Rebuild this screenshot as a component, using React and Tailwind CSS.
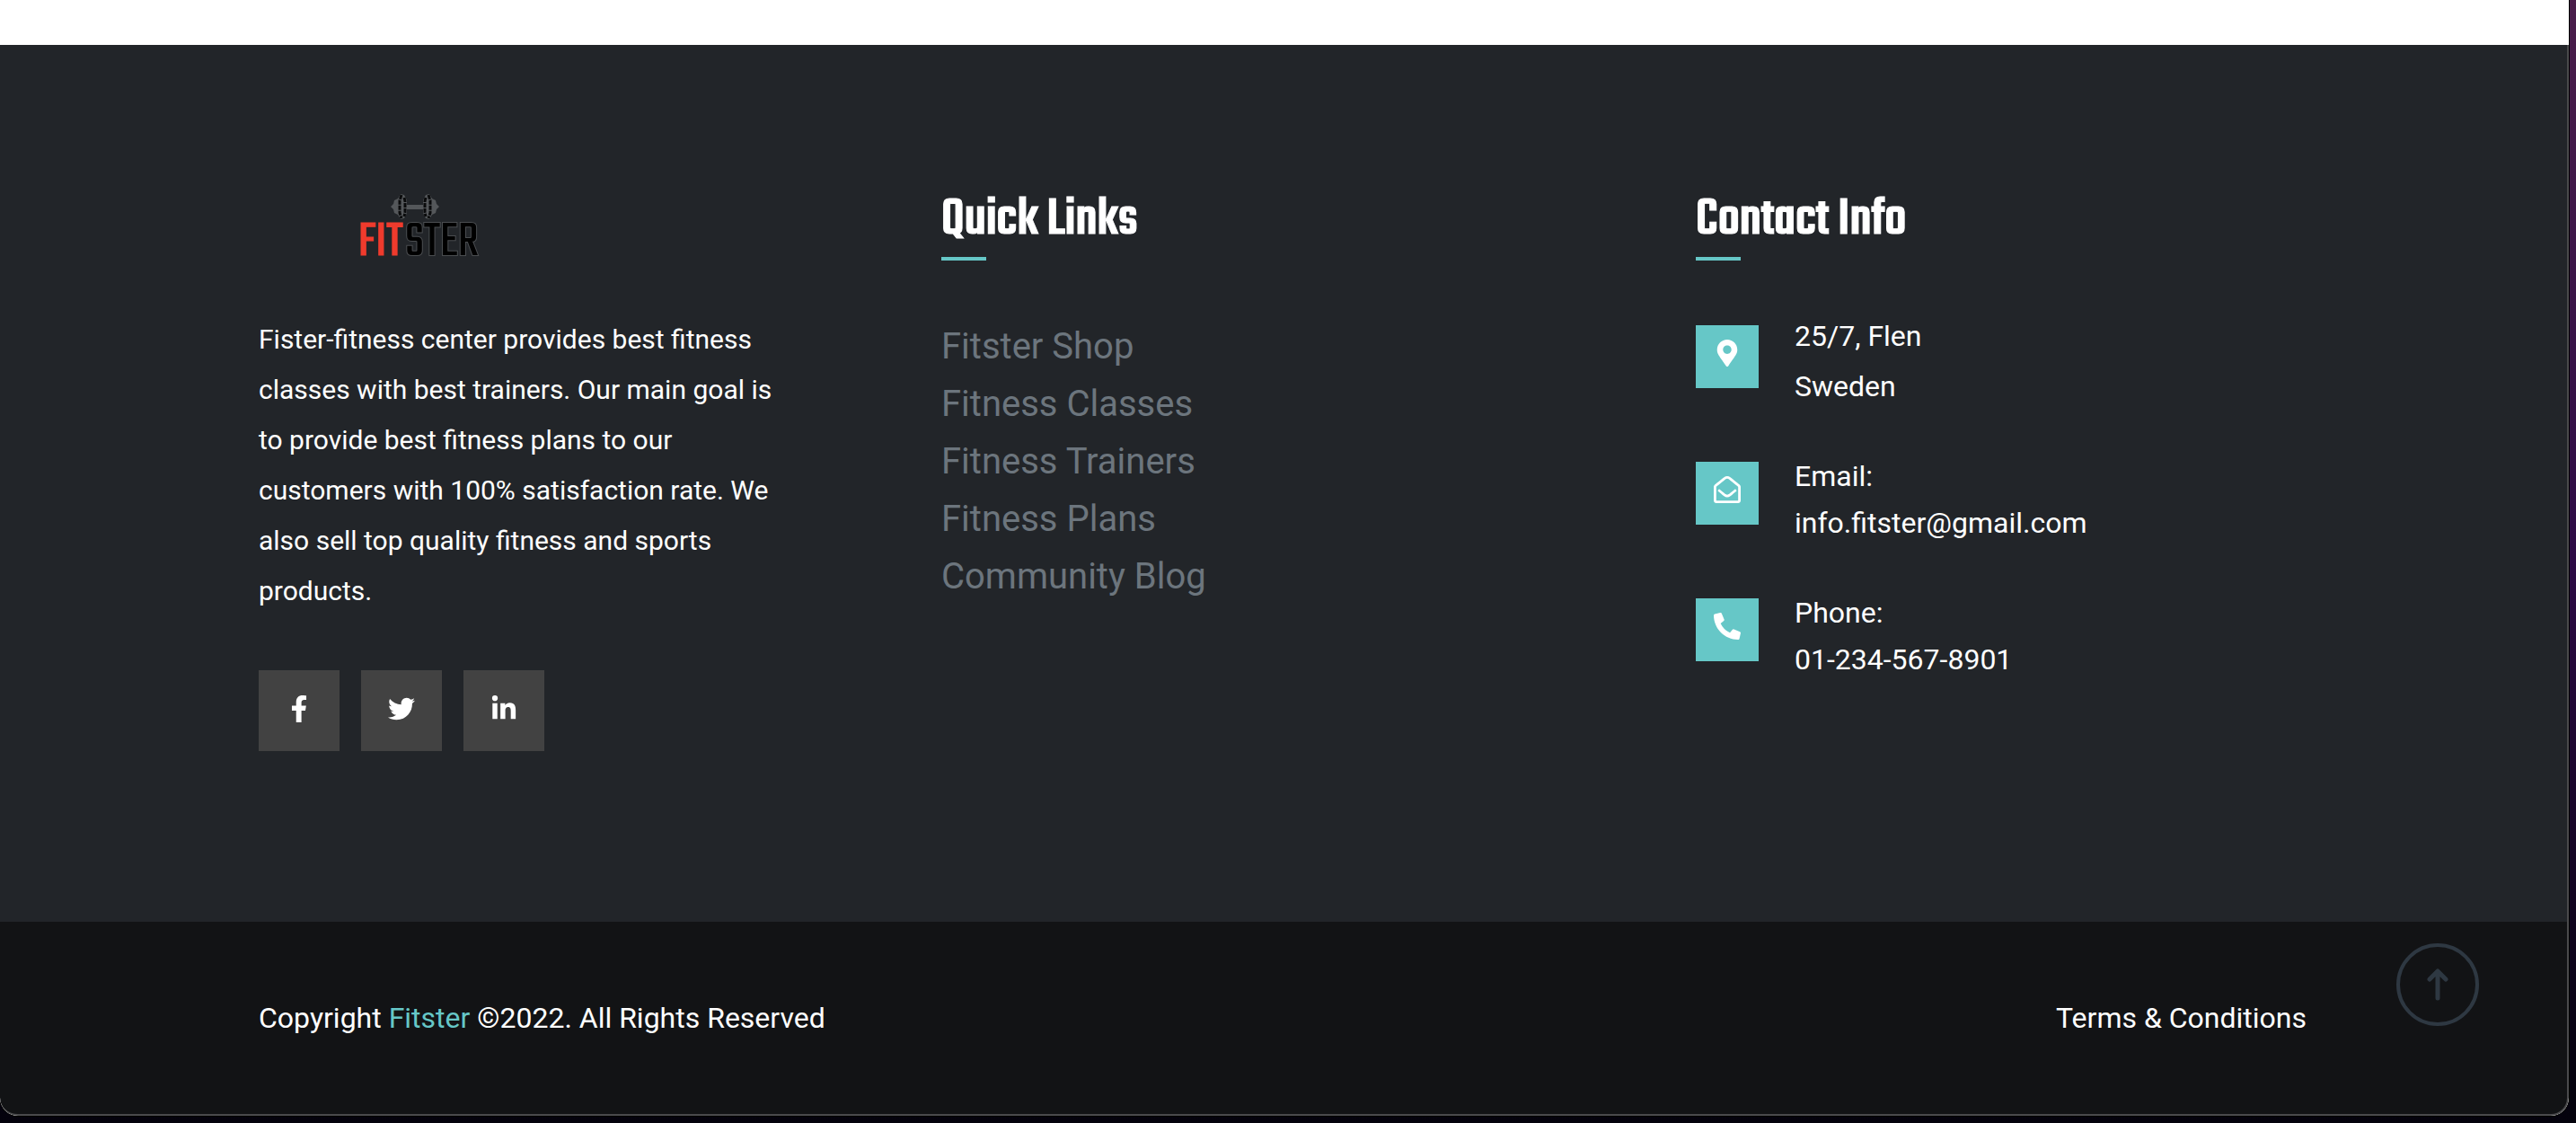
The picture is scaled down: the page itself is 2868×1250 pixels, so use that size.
import { FaFacebookF, FaTwitter, FaLinkedinIn, FaMapMarkerAlt, FaRegEnvelopeOpen, FaPhoneAlt } from "react-icons/fa";

const links = ["Fitster Shop", "Fitness Classes", "Fitness Trainers", "Fitness Plans", "Community Blog"];

const socials = [
  { label: "Facebook", Icon: FaFacebookF },
  { label: "Twitter", Icon: FaTwitter },
  { label: "LinkedIn", Icon: FaLinkedinIn },
];

const contacts = [
  { Icon: FaMapMarkerAlt, lines: ["25/7, Flen", "Sweden"], text: "leading-[56px] -mt-4" },
  { Icon: FaRegEnvelopeOpen, lines: ["Email:", "info.fitster@gmail.com"], text: "leading-[52px] -mt-2.5" },
  { Icon: FaPhoneAlt, lines: ["Phone:", "01-234-567-8901"], text: "leading-[52px] -mt-2.5" },
];

function Logo() {
  return (
    <svg viewBox="0 0 140 96" className="h-24 w-[140px] overflow-visible" role="img" aria-label="Fitster">
      <g fill="#54575a">
        <path d="M54 16h20v5H54z" />
        <path d="M37 18l3-3 1-4 4-2 3-5 4 1 3 6v14l-3 6-4 1-3-5-4-2-1-4z" />
        <path d="M91 18l-3-3-1-4-4-2-3-5-4 1-3 6v14l3 6 4 1 3-5 4-2 1-4z" />
      </g>
      <g fill="none" stroke="#0a0b0c" strokeWidth="3" strokeDasharray="5 1">
        <path d="M49 5l-2 6v14l2 6" />
        <path d="M52 8l1 4v12l-1 5" />
        <path d="M79 5l2 6v14l-2 6" />
        <path d="M76 8l-1 4v12l1 5" />
      </g>
      <text x="1" y="72" fontFamily="Teko, sans-serif" fontSize="58" fontWeight="400" fill="#ef3b2d" stroke="#ef3b2d" strokeWidth="1">FIT</text>
      <text x="53" y="72" fontFamily="Teko, sans-serif" fontSize="58" fontWeight="400" fill="#000" stroke="#4a4d50" strokeWidth="2" paintOrder="stroke">STER</text>
    </svg>
  );
}

function Heading({ children }) {
  return (
    <div>
      <h2 className="pb-1 font-['Teko',sans-serif] text-[60px] font-medium leading-[72px] text-white [-webkit-text-stroke:1px_white]">
        {children}
      </h2>
      <div className="h-1 w-[50px] bg-[#66c7c7]" />
    </div>
  );
}

export default function App() {
  return (
    <div className="min-h-screen bg-linear-to-b from-[#4a1d4a] via-[#2d0a45] to-[#04020c] pr-2 pb-2 font-['Roboto',sans-serif] text-white">
      <div className="overflow-hidden rounded-b-[20px] bg-white pt-[50px] shadow-[0_0_0_1px_#000]">
        <footer className="rounded-b-[20px] border-r-2 border-b-2 border-[#4a4a4c] bg-[#121315]">
          <div className="bg-[#222529] pt-40 pr-0.5 pb-[190px]">
            <div className="mx-auto grid max-w-[2280px] grid-cols-3">
              <section className="pr-[180px]">
                <a href="#home" aria-label="Fitster home" className="ml-[110px] block w-fit pt-0.5">
                  <Logo />
                </a>
                <p className="mt-[42px] text-[30px] leading-[56px]">
                  Fister-fitness center provides best fitness classes with best trainers. Our main goal is to
                  provide best fitness plans to our customers with 100% satisfaction rate. We also sell top
                  quality fitness and sports products.
                </p>
                <div className="mt-[60px] flex gap-6">
                  {socials.map(({ label, Icon }) => (
                    <a
                      key={label}
                      href={"#" + label.toLowerCase()}
                      aria-label={label}
                      className="flex size-[90px] justify-center bg-[#424242] pt-7"
                    >
                      <Icon className="size-[30px]" />
                    </a>
                  ))}
                </div>
              </section>

              <section>
                <Heading>Quick Links</Heading>
                <ul className="mt-16 text-[40px] leading-[64px] text-[#6c757d]">
                  {links.map((link) => (
                    <li key={link}>
                      <a href="#links">{link}</a>
                    </li>
                  ))}
                </ul>
              </section>

              <section className="pl-20">
                <Heading>Contact Info</Heading>
                <ul className="mt-[72px]">
                  {contacts.map(({ Icon, lines, text }) => (
                    <li key={lines[0]} className="flex h-[152px] gap-10">
                      <span className="flex size-[70px] justify-center bg-[#66c7c7] pt-4">
                        <Icon className="size-[30px]" />
                      </span>
                      <p className={"text-[32px] " + text}>
                        {lines[0]}
                        <br />
                        {lines[1]}
                      </p>
                    </li>
                  ))}
                </ul>
              </section>
            </div>
          </div>

          <div className="py-[79px] pr-0.5">
            <div className="mx-auto flex max-w-[2280px] justify-between text-[32px] leading-[56px]">
              <p>
                Copyright <a href="#home" className="text-[#66c7c7]">Fitster</a> ©2022. All Rights Reserved
              </p>
              <a href="#terms">Terms &amp; Conditions</a>
            </div>
          </div>
        </footer>
      </div>

      <button
        type="button"
        aria-label="Back to top"
        className="fixed right-[108px] bottom-[108px] flex size-[92px] items-center justify-center rounded-full border-4 border-[#2e3842] text-[#2e3842]"
      >
        <svg viewBox="0 0 24 36" className="h-9 w-6" fill="none" stroke="currentColor" strokeWidth="5" strokeLinecap="round" strokeLinejoin="round">
          <path d="M12 33V3M3 12l9-9 9 9" />
        </svg>
      </button>
    </div>
  );
}
